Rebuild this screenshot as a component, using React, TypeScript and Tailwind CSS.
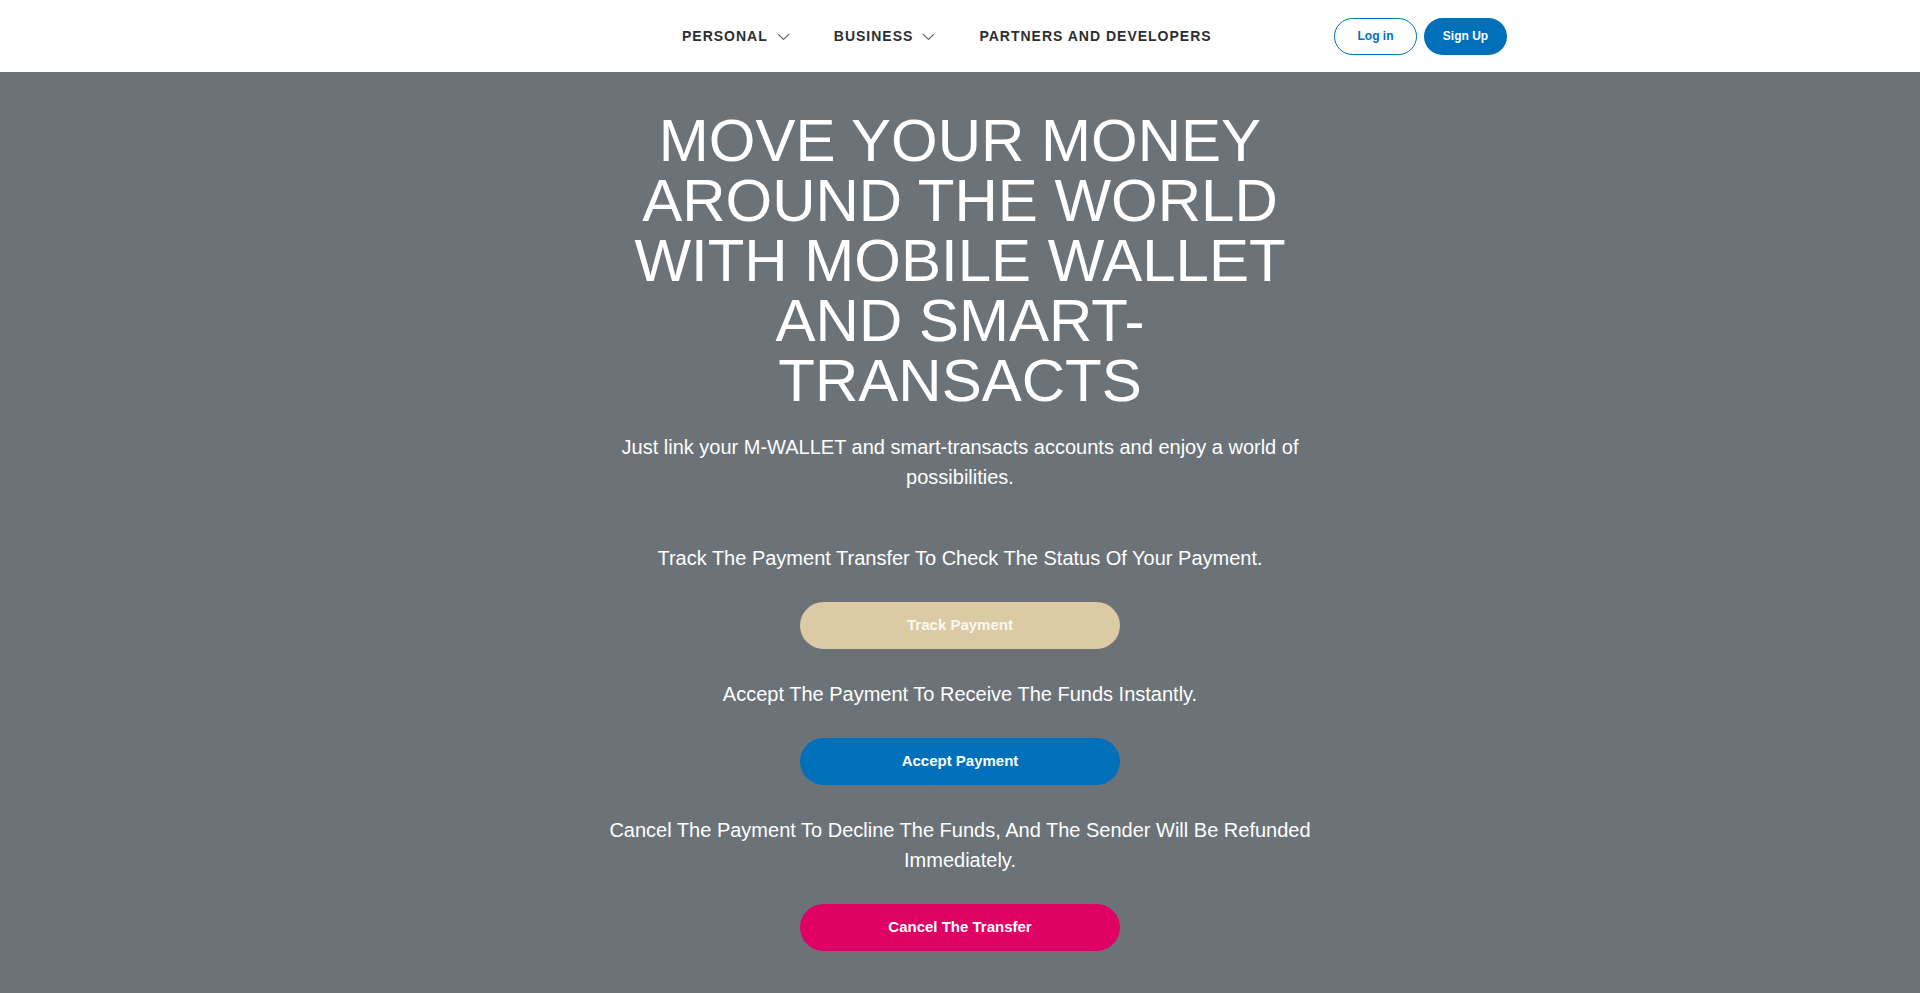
import React from 'react';

const Chevron: React.FC = () => (
  <svg width="13" height="8" viewBox="0 0 13 8" fill="none" className="ml-[9px] mt-[2px]">
    <path d="M1 1l5.5 5.5L12 1" stroke="#6b6b6b" strokeWidth="1.1" />
  </svg>
);

const navItems = [
  { label: 'PERSONAL', menu: true },
  { label: 'BUSINESS', menu: true },
  { label: 'PARTNERS AND DEVELOPERS', menu: false },
];

const actions = [
  {
    text: 'Track The Payment Transfer To Check The Status Of Your Payment.',
    button: 'Track Payment',
    color: 'bg-[#dbcaa4] text-[#fbf8f0]',
  },
  {
    text: 'Accept The Payment To Receive The Funds Instantly.',
    button: 'Accept Payment',
    color: 'bg-[#0070ba] text-white',
  },
  {
    text: 'Cancel The Payment To Decline The Funds, And The Sender Will Be Refunded Immediately.',
    button: 'Cancel The Transfer',
    color: 'bg-[#de0063] text-white',
  },
];

export default function App() {
  return (
    <div className="min-h-[993px] bg-[#6c7378] font-['Liberation_Sans',Arial,sans-serif]">
      {/* Header */}
      <header className="h-[72px] bg-white">
        <div className="mx-auto flex h-full w-[1150px] items-center pr-[28px]">
          <div className="w-[275px]" />
          <nav className="flex items-center">
            {navItems.map((item) => (
              <a
                key={item.label}
                href="#"
                className="flex items-center px-[22px] text-[14px] font-bold tracking-[1px] text-[#2c2e2f]"
              >
                {item.label}
                {item.menu && <Chevron />}
              </a>
            ))}
          </nav>
          <div className="ml-auto flex items-center gap-[7px]">
            <a
              href="#"
              className="flex h-[37px] w-[83px] items-center justify-center rounded-full border border-[#0070ba] text-[12px] font-bold text-[#0070ba]"
            >
              Log in
            </a>
            <a
              href="#"
              className="flex h-[37px] w-[83px] items-center justify-center rounded-full bg-[#0070ba] text-[12px] font-bold text-white"
            >
              Sign Up
            </a>
          </div>
        </div>
      </header>

      {/* Hero */}
      <main className="mx-auto flex w-[720px] flex-col items-center pt-[39px] pb-[40px] text-center text-white">
        <h1 className="text-[60px] leading-[60px] font-normal">
          MOVE YOUR MONEY AROUND THE WORLD WITH MOBILE WALLET AND SMART-TRANSACTS
        </h1>
        <p className="mt-[21px] text-[20px] leading-[30px]">
          Just link your M-WALLET and smart-transacts accounts and enjoy a world of possibilities.
        </p>

        <div className="mt-[51px] flex flex-col items-center">
          {actions.map((a) => (
            <div key={a.button} className="flex flex-col items-center">
              <p className="text-[20px] leading-[30px]">{a.text}</p>
              <button
                className={`mt-[29px] mb-[30px] flex h-[47px] w-[320px] items-center justify-center rounded-full text-[15px] font-bold ${a.color}`}
              >
                {a.button}
              </button>
            </div>
          ))}
        </div>
      </main>
    </div>
  );
}
